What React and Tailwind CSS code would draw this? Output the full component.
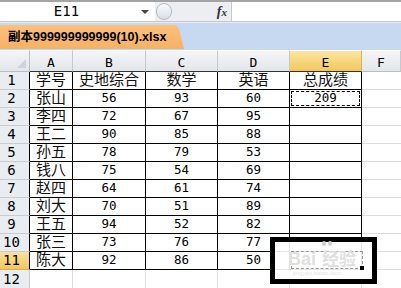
import React from "react";

const rows = [
  ["学号", "史地综合", "数学", "英语", "总成绩"],
  ["张山", "56", "93", "60", "209"],
  ["李四", "72", "67", "95", ""],
  ["王二", "90", "85", "88", ""],
  ["孙五", "78", "79", "53", ""],
  ["钱八", "75", "54", "69", ""],
  ["赵四", "64", "61", "74", ""],
  ["刘大", "70", "51", "89", ""],
  ["王五", "94", "52", "82", ""],
  ["张三", "73", "76", "77", ""],
  ["陈大", "92", "86", "50", ""],
];

const cols = ["A", "B", "C", "D", "E", "F"];
const font = { fontFamily: '"DejaVu Sans Mono", "Noto Sans CJK SC", monospace' };

function Cell({ value, r, c }) {
  const isNum = /^\d+$/.test(value);
  return (
    <div
      className={
        "relative h-[18px] flex items-center justify-center border-r border-b border-black " +
        (isNum ? "text-[12.5px]" : "text-[15px] text-[#111]")
      }
    >
      {value}
      {r === 1 && c === 4 && (
        <div className="absolute inset-[1px] border border-dashed border-black" />
      )}
    </div>
  );
}

export default function App() {
  return (
    <div className="relative w-[401px] h-[288px] overflow-hidden bg-white text-black" style={font}>
      {/* formula bar */}
      <div className="h-[22px] flex border-t-2 border-[#a4a4a4] border-b border-b-[#c4c7cc]">
        <div className="w-[155px] relative flex items-center justify-center text-[14px] pr-[22px] bg-white">
          E11
          <span className="absolute right-[6px] top-[8px] w-0 h-0 border-l-[4px] border-r-[4px] border-t-[4px] border-l-transparent border-r-transparent border-t-[#444]" />
        </div>
        <div className="w-[77px] flex items-center bg-[#eceef1] border-r border-[#c4c7cc]">
          <div className="w-[16px] h-[17px] rounded-full border border-[#b7bbc1] bg-gradient-to-b from-[#fafbfc] to-[#d9dde3] ml-[1px]" />
          <span
            className="ml-auto mr-[4px] text-[14px] italic font-bold text-[#333]"
            style={{ fontFamily: '"Liberation Serif", serif' }}
          >
            f<span className="text-[11px]">x</span>
          </span>
        </div>
        <div className="flex-1 bg-white" />
      </div>

      {/* workbook tab strip */}
      <div className="h-[28px] bg-[#c6d9f1] border-t border-[#e6ebf2] pt-[2px]">
        <div
          className="h-[24px] w-[184px] bg-gradient-to-b from-[#fcc07a] to-[#f7b164] flex items-center pl-[8px] text-[12.5px] font-bold [clip-path:polygon(0_0,176px_0,179px_15%,184px_100%,0_100%)]"
          style={{ fontFamily: '"Liberation Sans", "Noto Sans CJK SC", sans-serif' }}
        >
          副本999999999999(10).xlsx
        </div>
      </div>

      {/* grid */}
      <div className="grid grid-cols-[30px_43px_73px_72px_72px_72px_1fr]">
        {/* header row */}
        <div className="relative h-[22px] bg-gradient-to-b from-[#f4f5f7] to-[#e3e6ea] border-r border-b border-[#b9bec6] border-t border-t-white">
          <span className="absolute right-[3px] bottom-[3px] w-[9px] h-[9px] bg-[#cfd3d9] [clip-path:polygon(100%_0,100%_100%,0_100%)]" />
        </div>
        {cols.map((c, i) => (
          <div
            key={c}
            className={
              "h-[22px] flex items-start justify-center pt-[2px] text-[13px] border-t border-t-white border-r " +
              (i === 4
                ? "bg-gradient-to-b from-[#fbe7a1] to-[#f3c659] border-r-[#e0b04a] "
                : "bg-gradient-to-b from-[#f4f5f7] to-[#e3e6ea] border-r-[#c5c9cf] ") +
              (i < 5 ? "border-b border-b-[#333]" : "border-b border-b-[#b9bec6]")
            }
          >
            {c}
          </div>
        ))}

        {/* data rows */}
        {rows.map((row, r) => (
          <React.Fragment key={r}>
            <div
              className={
                "h-[18px] flex items-center justify-center pr-[6px] text-[14px] border-r border-r-black border-b " +
                (r === 10
                  ? "bg-gradient-to-b from-[#fbe29a] to-[#f2c65e] border-b-[#e0b04a]"
                  : "bg-[#e9ecf1] border-b-[#c7cbd2]")
              }
            >
              {r + 1}
            </div>
            {row.map((v, c) => (
              <Cell key={c} value={v} r={r} c={c} />
            ))}
            <div className="h-[18px] border-b border-[#d9dce1]" />
          </React.Fragment>
        ))}

        {/* row 12 */}
        <div className="h-[18px] flex items-center justify-center pr-[6px] text-[14px] bg-[#e9ecf1] border-r border-[#c7cbd2]">
          12
        </div>
        {cols.map((c, i) => (
          <div key={c} className={"h-[18px] " + (i < 5 ? "border-r border-[#d9dce1]" : "")} />
        ))}
      </div>

      {/* annotation box over E11 */}
      <div className="absolute left-[270px] top-[237px] w-[107px] h-[47px] border-[5px] border-black bg-white/90">
        <div className="absolute left-[16px] top-[9px] w-[72px] h-[18px] border border-dashed border-[#9a9a9a]" />
        <div className="absolute left-[47px] top-[-1px] flex gap-[2px]">
          <span className="w-[4px] h-[5px] rounded-full bg-[#d0d0d0]" />
          <span className="w-[4px] h-[5px] rounded-full bg-[#d0d0d0]" />
        </div>
        <div
          className="absolute left-[13px] top-[8px] flex items-baseline text-[18px] font-bold text-[#e0e0e0] leading-none"
          style={{ fontFamily: '"Liberation Sans", "Noto Sans CJK SC", sans-serif' }}
        >
          Bai<span className="ml-[6px] text-[17px]">经验</span>
        </div>
        <div
          className="absolute left-[18px] top-[28px] text-[6px] text-[#e4e4e4] leading-none"
          style={{ fontFamily: '"Liberation Sans", sans-serif' }}
        >
          jingyan.baidu.com
        </div>
        <span className="absolute left-[85px] top-[24px] w-[4px] h-[4px] bg-black" />
      </div>
    </div>
  );
}
